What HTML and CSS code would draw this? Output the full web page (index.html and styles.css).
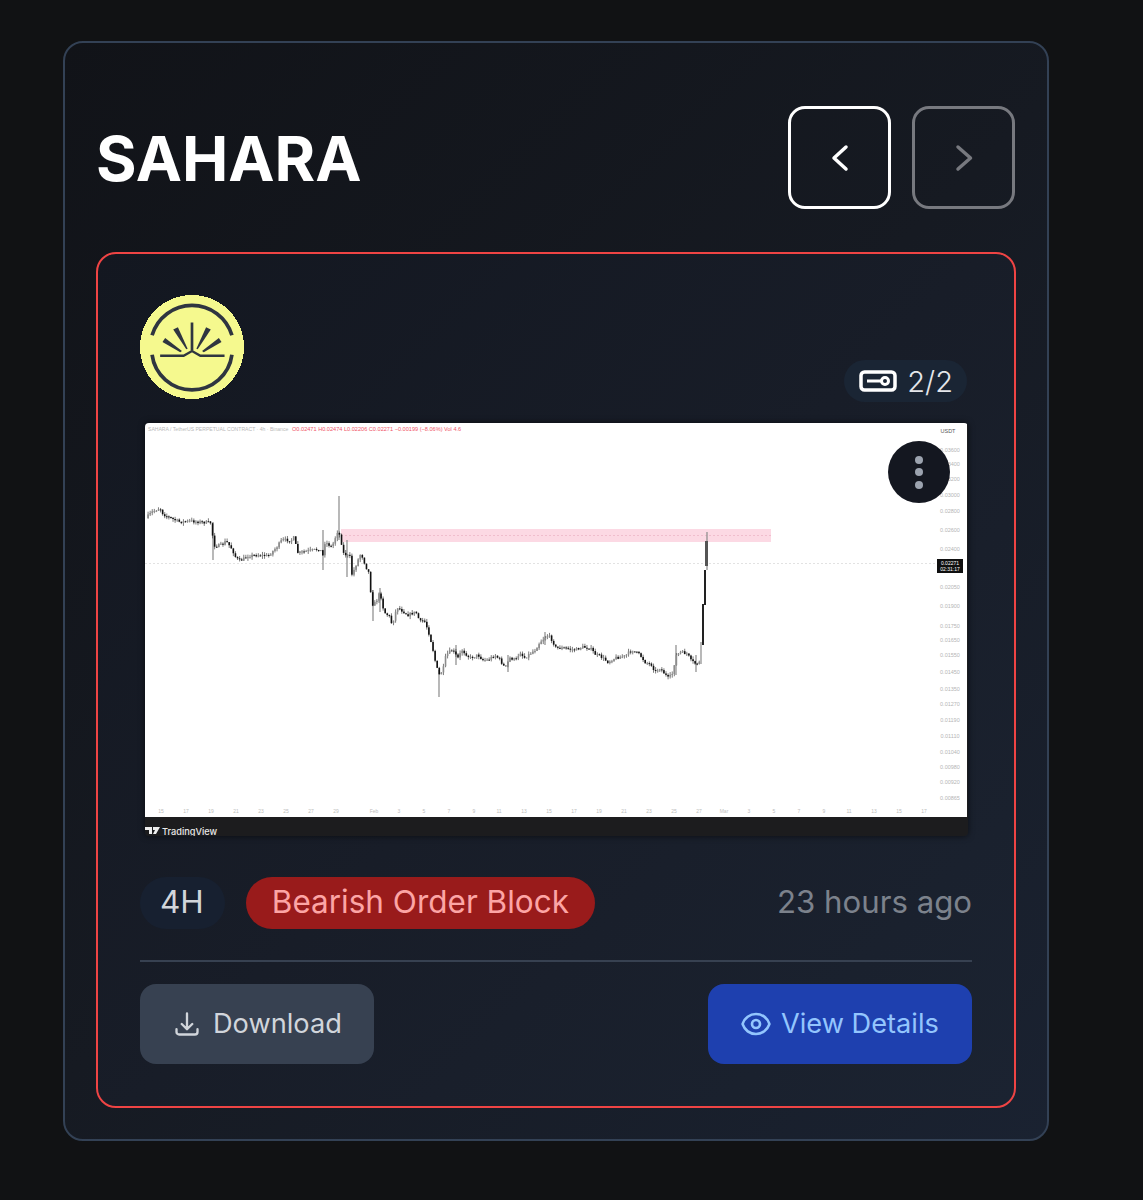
FILE: index.html
```html
<!DOCTYPE html>
<html lang="en">
<head>
    <meta charset="UTF-8">
    <meta name="viewport" content="width=device-width, initial-scale=1.0">
    <title>SAHARA</title>
    <link rel="stylesheet" href="styles.css">
</head>
<body>
    <div class="panel">
        <div class="panel-header">
            <h1 class="coin-title">SAHARA</h1>
            <div class="nav-buttons">
                <button class="nav-btn nav-active">
                    <svg width="32" height="32" viewBox="0 0 32 32"><path d="M22 5 10 16 22 27"/></svg>
                </button>
                <button class="nav-btn nav-muted">
                    <svg width="32" height="32" viewBox="0 0 32 32"><path d="M10 5 22.5 16 10 27"/></svg>
                </button>
            </div>
        </div>

        <div class="signal-card">
            <div class="signal-top">
                <svg class="coin-logo" width="104" height="104" viewBox="30 30 310 310">
                    <circle cx="185" cy="185" r="155" fill="#f5f98e" shape-rendering="crispEdges"/>
                    <g fill="none" stroke="#2f3540">
                        <path d="M66 150A124 124 0 0 1 304 150" stroke-width="11"/>
                        <path d="M66 208A120 120 0 0 0 304 208" stroke-width="11"/>
                        <path d="M90 211H160L185 197 210 211H282" stroke-width="7"/>
                        <path d="M185 112V195" stroke-width="8"/>
                    </g>
                    <g fill="#2f3540">
                        <polygon points="129,133 143,126 172,190 168,192"/>
                        <polygon points="97,170 105,158 155,197 150,201"/>
                        <polygon points="241,133 227,126 198,190 202,192"/>
                        <polygon points="273,170 265,158 215,197 220,201"/>
                    </g>
                </svg>
                <div class="count-badge">
                    <svg width="38" height="22" viewBox="0 0 38 22">
                        <rect x="2" y="2" width="34" height="18" rx="3.5" fill="none" stroke="#fff" stroke-width="3.5"/>
                        <path d="M8 11H22" stroke="#fff" stroke-width="3"/>
                        <circle cx="26" cy="11" r="3.5" fill="none" stroke="#fff" stroke-width="3"/>
                    </svg>
                    <span>2/2</span>
                </div>
            </div>

            <div class="chart-wrap">
                <svg class="chart" width="823" height="413" viewBox="145 423 823 413">
                    <rect x="145" y="423" width="823" height="413" fill="#1c1c1e"/>
                    <rect x="145" y="423" width="822" height="394" fill="#fff"/>

                    <text class="chart-title" x="148" y="431">SAHARA / TetherUS PERPETUAL CONTRACT · 4h · Binance</text>
                    <text class="chart-ohlc" x="292" y="431">O0.02471 H0.02474 L0.02206 C0.02271 −0.00199 (−8.06%) Vol 4.6</text>
                    <text class="chart-unit" x="948" y="433">USDT</text>

                    <rect x="341" y="529" width="430" height="13" fill="#fcd9e4"/>
                    <path d="M341 535.5H771" stroke="#e8a9bd" stroke-width="0.6" stroke-dasharray="2 2"/>
                    <path d="M145 563.5H937" stroke="#d5d5d5" stroke-width="0.7" stroke-dasharray="2 2"/>

                    <path class="wicks" d="M213 522V560M323 530V570M339 496V540M347 540V577M373 590V621M380 588V612M439 670V697M456 645V665M508 655V672M545 632V645M676 645V675M696 655V672M707 532V570M701 664V642"/>
                    <g id="candles"></g>
                    <path d="M703 645V604M705 605V570" stroke="#222" stroke-width="2"/>
                    <path d="M706.5 541V566" stroke="#555" stroke-width="3"/>

                    <g class="axis-y">
                        <text x="950" y="452">0.03600</text>
                        <text x="950" y="466">0.03400</text>
                        <text x="950" y="481">0.03200</text>
                        <text x="950" y="497">0.03000</text>
                        <text x="950" y="513">0.02800</text>
                        <text x="950" y="532">0.02600</text>
                        <text x="950" y="551">0.02400</text>
                        <text x="950" y="589">0.02050</text>
                        <text x="950" y="608">0.01900</text>
                        <text x="950" y="628">0.01750</text>
                        <text x="950" y="642">0.01650</text>
                        <text x="950" y="657">0.01550</text>
                        <text x="950" y="674">0.01450</text>
                        <text x="950" y="691">0.01350</text>
                        <text x="950" y="706">0.01270</text>
                        <text x="950" y="722">0.01190</text>
                        <text x="950" y="738">0.01110</text>
                        <text x="950" y="754">0.01040</text>
                        <text x="950" y="769">0.00980</text>
                        <text x="950" y="784">0.00920</text>
                        <text x="950" y="800">0.00865</text>
                    </g>
                    <rect x="937" y="559" width="26" height="14" fill="#0f0f0f"/>
                    <text class="price-tag" x="950" y="565">0.02271</text>
                    <text class="price-tag" x="950" y="571">02:31:17</text>

                    <g class="axis-x">
                        <text x="161" y="813">15</text>
                        <text x="186" y="813">17</text>
                        <text x="211" y="813">19</text>
                        <text x="236" y="813">21</text>
                        <text x="261" y="813">23</text>
                        <text x="286" y="813">25</text>
                        <text x="311" y="813">27</text>
                        <text x="336" y="813">29</text>
                        <text x="374" y="813">Feb</text>
                        <text x="399" y="813">3</text>
                        <text x="424" y="813">5</text>
                        <text x="449" y="813">7</text>
                        <text x="474" y="813">9</text>
                        <text x="499" y="813">11</text>
                        <text x="524" y="813">13</text>
                        <text x="549" y="813">15</text>
                        <text x="574" y="813">17</text>
                        <text x="599" y="813">19</text>
                        <text x="624" y="813">21</text>
                        <text x="649" y="813">23</text>
                        <text x="674" y="813">25</text>
                        <text x="699" y="813">27</text>
                        <text x="724" y="813">Mar</text>
                        <text x="749" y="813">3</text>
                        <text x="774" y="813">5</text>
                        <text x="799" y="813">7</text>
                        <text x="824" y="813">9</text>
                        <text x="849" y="813">11</text>
                        <text x="874" y="813">13</text>
                        <text x="899" y="813">15</text>
                        <text x="924" y="813">17</text>
                    </g>

                    <path d="M145 827H152V834H149V830H145ZM153 827H160L156 834H153L155 830H153Z" fill="#eee"/>
                    <text class="tv-brand" x="162" y="835">TradingView</text>
                </svg>
                <button class="menu-btn"><span></span><span></span><span></span></button>
            </div>

            <div class="signal-meta">
                <div class="tags">
                    <span class="tag tag-time">4H</span>
                    <span class="tag tag-bearish">Bearish Order Block</span>
                </div>
                <span class="time-ago">23 hours ago</span>
            </div>

            <div class="signal-actions">
                <button class="action-btn btn-download">
                    <svg width="28" height="28" viewBox="0 0 24 24"><path d="M3 16.5v2.25A2.25 2.25 0 0 0 5.25 21h13.5A2.25 2.25 0 0 0 21 18.75V16.5M16.5 12 12 16.5m0 0L7.5 12m4.5 4.5V3"/></svg>
                    Download
                </button>
                <button class="action-btn btn-view">
                    <svg width="32" height="32" viewBox="0 0 24 24"><path d="M2.036 12.322a1.012 1.012 0 0 1 0-.639C3.423 7.51 7.36 4.5 12 4.5c4.638 0 8.573 3.007 9.963 7.178.07.207.07.431 0 .639C20.577 16.49 16.64 19.5 12 19.5c-4.638 0-8.573-3.007-9.963-7.178Z"/><path d="M15 12a3 3 0 1 1-6 0 3 3 0 0 1 6 0Z"/></svg>
                    View Details
                </button>
            </div>
        </div>
    </div>
    <script src="chart.js"></script>
</body>
</html>
```
FILE: styles.css
```css
body {
    margin: 0;
    background-color: #111214;
    font-family: Inter, "Liberation Sans", sans-serif;
}
.panel {
    box-sizing: border-box;
    width: 986px;
    height: 1100px;
    margin: 41px 0 0 63px;
    padding: 0 31px;
    border: 2px solid #334155;
    border-radius: 20px;
    background: linear-gradient(135deg, #111318 0%, #161a22 50%, #1a2231 100%);
}
.panel-header {
    display: flex;
    justify-content: space-between;
    align-items: center;
    height: 103px;
    margin: 63px 1px 43px;
}
.coin-title {
    margin: 0 0 0 -1px;
    padding-top: 2px;
    color: #fff;
    font-size: 62px;
    font-weight: 700;
}
.nav-buttons {
    display: flex;
    gap: 21px;
}
.nav-btn {
    display: flex;
    justify-content: center;
    align-items: center;
    box-sizing: border-box;
    width: 103px;
    height: 103px;
    padding: 0;
    border-radius: 17px;
    background: transparent;
}
.nav-btn path {
    fill: none;
    stroke-width: 3.5;
    stroke-linecap: round;
    stroke-linejoin: round;
}
.nav-active { border: 3px solid #fff; }
.nav-active path { stroke: #fff; }
.nav-muted { border: 3px solid #77797f; }
.nav-muted path { stroke: #77797f; }

.signal-card {
    box-sizing: border-box;
    height: 856px;
    padding: 41px 42px;
    border: 2px solid #ef4444;
    border-radius: 20px;
    background: linear-gradient(135deg, #131720 0%, #181d28 50%, #1b2331 100%);
}
.signal-top {
    display: flex;
    justify-content: space-between;
    align-items: flex-end;
    height: 107px;
    margin-bottom: 19px;
}
.coin-logo {
    align-self: flex-start;
}
.count-badge {
    display: flex;
    align-items: center;
    gap: 10px;
    box-sizing: border-box;
    height: 42px;
    margin-right: 5px;
    padding: 0 14px 0 15px;
    border-radius: 21px;
    background-color: #1a2534;
    color: #e5e7eb;
    font-size: 29px;
    font-weight: 300;
}

.chart-wrap {
    position: relative;
    height: 415px;
    padding: 2px 4px 0 5px;
    box-sizing: border-box;
}
.chart {
    display: block;
    border-radius: 4px;
    box-shadow: 0 0 6px rgba(0, 0, 0, 0.6);
}
.chart text { font-family: "Liberation Sans", sans-serif; }
.chart-title { fill: #b8b8b8; font-size: 5.1px; }
.chart-ohlc { fill: #f0566a; font-size: 5.6px; }
.chart-unit { fill: #555; font-size: 5.5px; text-anchor: middle; }
.wicks { stroke: #8a8a8a; stroke-width: 1.2; fill: none; }
#candles { filter: blur(0.25px); }
.axis-y text { fill: #b5b5b5; font-size: 5.5px; text-anchor: middle; }
.axis-x text { fill: #bdbdbd; font-size: 5px; text-anchor: middle; }
.chart .price-tag { fill: #fff; font-size: 5px; text-anchor: middle; }
.chart .tv-brand { fill: #e8e8e8; font-family: Inter, sans-serif; font-size: 9.2px; font-weight: 500; }

.menu-btn {
    position: absolute;
    top: 20px;
    right: 22px;
    display: flex;
    flex-direction: column;
    justify-content: center;
    align-items: center;
    gap: 4.5px;
    width: 62px;
    height: 62px;
    padding: 0;
    border: none;
    border-radius: 50%;
    background-color: #141720;
}
.menu-btn span {
    width: 8px;
    height: 8px;
    border-radius: 50%;
    background-color: #9ca3af;
}

.signal-meta {
    display: flex;
    justify-content: space-between;
    align-items: center;
    margin-top: 41px;
    padding-bottom: 31px;
    border-bottom: 2px solid #374151;
}
.tags {
    display: flex;
    gap: 21px;
}
.tag {
    display: flex;
    align-items: center;
    box-sizing: border-box;
    height: 52px;
    padding: 0 21px 3px 20px;
    border-radius: 26px;
    font-size: 31.5px;
}
.tag-time {
    background-color: #172030;
    color: #d1d5db;
}
.tag-bearish {
    padding: 0 26px 3px;
    background-color: #991b1b;
    color: #fca5a5;
}
.time-ago {
    padding-bottom: 3px;
    color: #7c828c;
    font-size: 31.2px;
}

.signal-actions {
    display: flex;
    justify-content: space-between;
    margin-top: 22px;
}
.action-btn {
    display: flex;
    align-items: center;
    height: 80px;
    padding-bottom: 2px;
    border: none;
    border-radius: 16px;
    font-family: inherit;
    font-size: 27.2px;
}
.action-btn path {
    fill: none;
    stroke: currentColor;
    stroke-width: 2;
    stroke-linecap: round;
    stroke-linejoin: round;
}
.btn-download {
    gap: 12px;
    width: 234px;
    padding-left: 33px;
    background-color: #374151;
    color: #d1d5db;
}
.btn-view {
    gap: 9px;
    width: 264px;
    padding-left: 32px;
    background-color: #1e40af;
    color: #93c5fd;
}
```
FILE: chart.js
```js
// Velas dibujadas a partir de los puntos de la curva de precio
const points = [[146,518],[152,512],[160,508],[163,514],[170,518],[180,522],[190,521],[200,522],[212,523],[213,545],[216,546],[222,545],[226,541],[232,549],[236,558],[240,561],[248,556],[258,555],[268,556],[276,548],[282,540],[292,540],[295,536],[296,548],[298,553],[308,551],[320,549],[323,556],[325,542],[332,547],[338,530],[341,540],[343,553],[350,557],[352,575],[358,560],[361,553],[366,567],[370,575],[371,600],[373,605],[376,602],[380,592],[384,612],[390,617],[392,625],[397,607],[408,615],[416,612],[420,622],[424,620],[428,630],[432,645],[436,665],[439,675],[443,670],[446,655],[452,650],[458,658],[462,650],[470,658],[478,655],[483,660],[488,660],[495,655],[500,660],[505,668],[510,658],[516,660],[520,652],[524,658],[535,650],[540,642],[548,635],[552,640],[556,648],[565,648],[575,650],[582,647],[590,648],[596,655],[600,656],[608,662],[615,658],[625,656],[632,650],[640,655],[645,662],[652,665],[655,672],[660,668],[668,678],[672,675],[676,656],[680,652],[688,654],[690,660],[696,664],[700,662]];

let seed = 7;
function rand() {
    seed = (seed * 16807) % 2147483647;
    return seed / 2147483647;
}

function priceAt(x) {
    for (let i = 1; i < points.length; i++) {
        if (x <= points[i][0]) {
            const [x0, y0] = points[i - 1];
            const [x1, y1] = points[i];
            return y0 + (y1 - y0) * (x - x0) / (x1 - x0);
        }
    }
    return points[points.length - 1][1];
}

const group = document.getElementById('candles');
const ns = 'http://www.w3.org/2000/svg';
const step = 2.08;
let open = priceAt(146);

for (let x = 146 + step; x < 701; x += step) {
    const close = priceAt(x) + (rand() - 0.5) * 3;
    const top = Math.min(open, close);
    const bottom = Math.max(open, close);
    const down = close > open;

    const wick = document.createElementNS(ns, 'line');
    wick.setAttribute('x1', x);
    wick.setAttribute('x2', x);
    wick.setAttribute('y1', top - rand() * 3);
    wick.setAttribute('y2', bottom + rand() * 3);
    wick.setAttribute('stroke', '#444');
    wick.setAttribute('stroke-width', '0.7');
    group.appendChild(wick);

    const body = document.createElementNS(ns, 'rect');
    body.setAttribute('x', x - 0.8);
    body.setAttribute('y', top);
    body.setAttribute('width', 1.6);
    body.setAttribute('height', Math.max(bottom - top, 1));
    body.setAttribute('fill', down ? '#111' : '#8c8c8c');
    group.appendChild(body);

    open = close;
}
```
